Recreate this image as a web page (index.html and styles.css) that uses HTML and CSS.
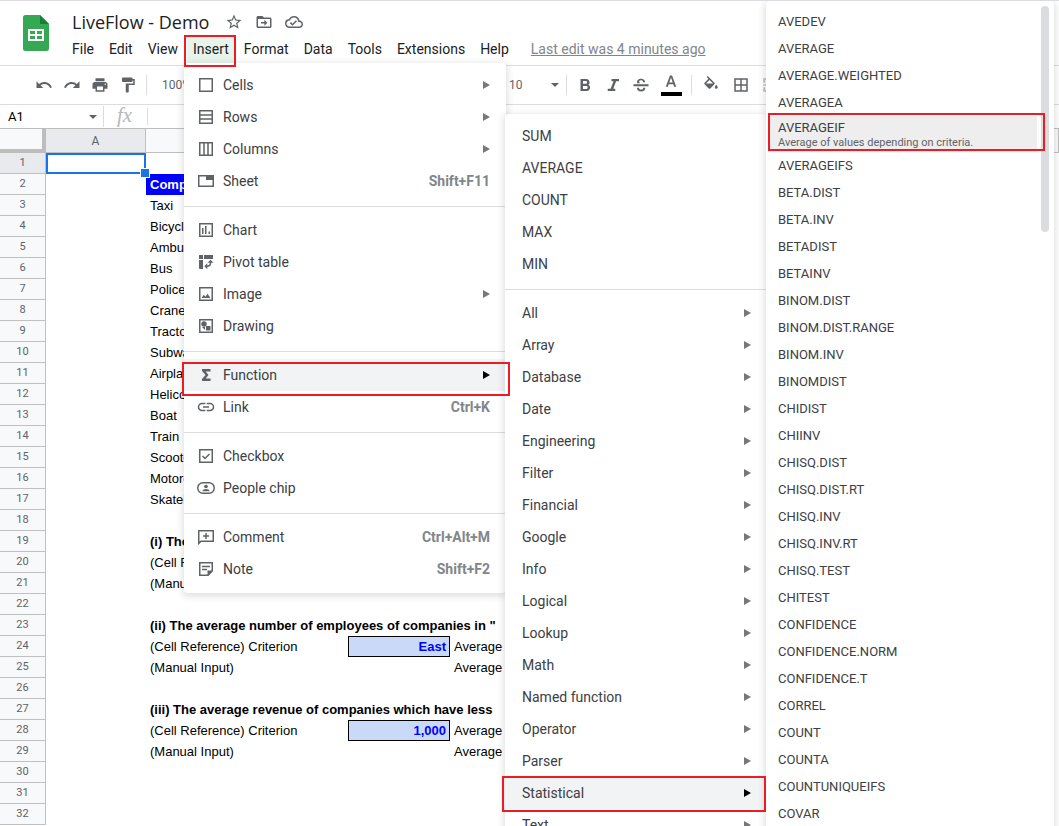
FILE: index.html
```html
<!DOCTYPE html>
<html lang="en">
<head>
    <meta charset="UTF-8">
    <meta name="viewport" content="width=device-width, initial-scale=1.0">
    <title>LiveFlow - Demo</title>
    <link rel="stylesheet" href="styles.css">
</head>
<body>
    <header class="header">
        <svg class="logo" viewBox="0 0 26 36">
            <path d="M2.500 0H17L26 9V33.500A2.500 2.500 0 0 1 23.500 36H2.500A2.500 2.500 0 0 1 0 33.500V2.500A2.500 2.500 0 0 1 2.500 0Z" fill="#34a853"/>
            <path d="M17 0L26 9H17Z" fill="#188038"/>
            <path fill="#fff" fill-rule="evenodd" d="M5 14H21V26H5ZM7 16V19H12V16ZM14 16V19H19V16ZM7 21V24H12V21ZM14 21V24H19V21Z"/>
        </svg>
        <div class="header-main">
            <div class="title-row">
                <input class="doc-title" type="text" value="LiveFlow - Demo" aria-label="Document name">
                <button class="title-btn" aria-label="Star">
                    <svg viewBox="0 0 24 24"><path d="M22 9.240l-7.190-.620L12 2 9.190 8.630 2 9.240l5.460 4.730L5.820 21 12 17.270 18.180 21l-1.630-7.030L22 9.240zM12 15.400l-3.760 2.270 1-4.280-3.320-2.880 4.380-.380L12 6.100l1.710 4.040 4.380.380-3.320 2.880 1 4.280L12 15.400z"/></svg>
                </button>
                <button class="title-btn" aria-label="Move">
                    <svg viewBox="0 0 24 24"><path d="M20 6h-8l-2-2H4c-1.100 0-2 .900-2 2v12c0 1.100.900 2 2 2h16c1.100 0 2-.900 2-2V8c0-1.100-.900-2-2-2zm0 12H4V8h16v10zM12.500 17l4-4-4-4v3H8v2h4.500z"/></svg>
                </button>
                <button class="title-btn" aria-label="Saved to cloud">
                    <svg viewBox="0 0 24 24"><path d="M19.350 10.040A7.490 7.490 0 0 0 12 4C9.110 4 6.600 5.640 5.350 8.040A5.994 5.994 0 0 0 0 14c0 3.310 2.690 6 6 6h13c2.760 0 5-2.240 5-5 0-2.640-2.050-4.780-4.650-4.960zM19 18H6c-2.210 0-4-1.790-4-4s1.790-4 4-4h.710C7.370 7.690 9.480 6 12 6c3.040 0 5.500 2.460 5.500 5.500v.500H19c1.660 0 3 1.340 3 3s-1.340 3-3 3zm-9-3.820l-2.090-2.090L6.500 13.500 10 17l6.010-6.010-1.410-1.410z"/></svg>
                </button>
            </div>
            <nav class="menubar">
                <button>File</button>
                <button>Edit</button>
                <button>View</button>
                <button class="open marked">Insert</button>
                <button>Format</button>
                <button>Data</button>
                <button>Tools</button>
                <button>Extensions</button>
                <button>Help</button>
                <a class="last-edit" href="#">Last edit was 4 minutes ago</a>
            </nav>
        </div>
    </header>

    <div class="toolbar">
        <button aria-label="Undo"><svg viewBox="0 0 24 24"><path d="M12.500 8c-2.650 0-5.050.990-6.900 2.600L2 7v9h9l-3.620-3.620c1.390-1.160 3.160-1.880 5.120-1.880 3.540 0 6.550 2.310 7.600 5.500l2.370-.780C21.080 11.030 17.150 8 12.500 8z"/></svg></button>
        <button aria-label="Redo"><svg viewBox="0 0 24 24"><path d="M18.400 10.600C16.550 8.990 14.150 8 11.500 8c-4.650 0-8.580 3.030-9.960 7.220L3.900 16c1.050-3.190 4.050-5.500 7.600-5.500 1.950 0 3.730.720 5.120 1.880L13 16h9V7l-3.600 3.600z"/></svg></button>
        <button aria-label="Print"><svg viewBox="0 0 24 24"><path d="M19 8H5c-1.660 0-3 1.340-3 3v6h4v4h12v-4h4v-6c0-1.660-1.340-3-3-3zm-3 11H8v-5h8v5zm3-7c-.550 0-1-.450-1-1s.450-1 1-1 1 .450 1 1-.450 1-1 1zm-1-9H6v4h12V3z"/></svg></button>
        <button aria-label="Paint format"><svg viewBox="0 0 24 24"><path d="M18 4V3c0-.550-.450-1-1-1H5c-.550 0-1 .450-1 1v4c0 .550.450 1 1 1h12c.550 0 1-.450 1-1V6h1v4H9v11c0 .550.450 1 1 1h2c.550 0 1-.450 1-1v-9h8V4h-3z"/></svg></button>
        <span class="divider"></span>
        <label class="pick zoom"><select aria-label="Zoom"><option>100%</option></select></label>
        <label class="pick font"><select aria-label="Font"><option>Arial</option></select></label>
        <label class="pick size"><select aria-label="Font size"><option>10</option></select></label>
        <span class="divider"></span>
        <button aria-label="Bold"><svg viewBox="0 0 24 24"><path d="M16.500 11.700c1-.700 1.700-1.800 1.700-2.900C18.200 6 16.200 4 13.500 4H6v16h8.200c2.700 0 4.600-2.100 4.600-4.600 0-1.700-.900-3.100-2.300-3.700zM9.300 6.800h3.700a1.800 1.800 0 0 1 0 3.600H9.300zM13.700 17.200H9.300v-3.900h4.400a1.950 1.950 0 0 1 0 3.900z"/></svg></button>
        <button aria-label="Italic"><svg viewBox="0 0 24 24"><path d="M10 4v3h2.710l-3.920 10H5v3h10v-3h-2.710l3.920-10H20V4z"/></svg></button>
        <button aria-label="Strikethrough"><svg viewBox="0 0 24 24"><path d="M2 11h20v2.500H2zM7 9.500C6 5.500 8.500 3.500 12 3.500c3.300 0 5.500 1.700 5.500 4.700h-2.800c0-1.600-1-2.400-2.700-2.400-2.600 0-3.200 1.900-1.800 3.200l.8.500zM6.500 15.500h2.800c.1 1.700 1.200 2.500 2.900 2.500 2.200 0 3-1.200 2.500-2.500h2.900c.5 3.100-1.900 5-5.400 5-3.500 0-5.700-1.800-5.700-5z"/></svg></button>
        <button class="text-color" aria-label="Text color"><svg viewBox="0 0 24 24"><path d="M10.600 2L5 17h2.700l1.200-3.500h6.200l1.200 3.500H19L13.400 2zM9.700 11.200L12 4.700l2.300 6.500z"/></svg></button>
        <span class="divider"></span>
        <button class="wide" aria-label="Fill color"><svg viewBox="0 0 24 24"><path d="M16.560 8.940L7.620 0 6.210 1.410l2.380 2.380-5.150 5.150c-.590.590-.590 1.540 0 2.120l5.500 5.500c.290.290.680.440 1.060.440s.770-.150 1.060-.440l5.500-5.500c.590-.580.590-1.530 0-2.120zM5.210 10L10 5.210 14.790 10H5.210zM19 11.500s-2 2.170-2 3.500c0 1.100.900 2 2 2s2-.900 2-2c0-1.330-2-3.500-2-3.500z"/></svg></button>
        <button class="wide" aria-label="Borders"><svg viewBox="0 0 24 24"><path d="M3 3v18h18V3H3zm8 16H5v-6h6v6zm0-8H5V5h6v6zm8 8h-6v-6h6v6zm0-8h-6V5h6v6z"/></svg></button>
        <button class="off" aria-label="Merge cells"><svg viewBox="0 0 24 24"><path d="M3 3h7v2.500H5.500V9H3zM21 3h-7v2.500h4.500V9H21zM3 21h7v-2.500H5.500V15H3zM21 21h-7v-2.500h4.500V15H21zM3 11h5V8.500l4 3.500-4 3.500V13H3zM21 11h-5V8.500L12 12l4 3.500V13h5z"/></svg></button>
    </div>

    <div class="formula-bar">
        <label class="pick name-box"><input type="text" value="A1" aria-label="Name box"></label>
        <span class="fx">fx</span>
        <input class="formula" type="text" aria-label="Formula">
    </div>

    <table class="sheet">
        <colgroup>
            <col class="col-num"><col class="col-a"><col class="col"><col class="col"><col class="col-d"><col>
        </colgroup>
        <thead>
            <tr><th class="corner"></th><th class="active">A</th><th>B</th><th>C</th><th>D</th><th>E</th></tr>
        </thead>
        <tbody>
            <tr><th class="active">1</th><td class="selected"></td><td></td><td></td><td></td><td></td></tr>
            <tr><th>2</th><td></td><td class="head">Company</td><td class="head"></td><td class="head"></td><td></td></tr>
            <tr><th>3</th><td></td><td>Taxi</td><td></td><td></td><td></td></tr>
            <tr><th>4</th><td></td><td>Bicycle</td><td></td><td></td><td></td></tr>
            <tr><th>5</th><td></td><td>Ambulance</td><td></td><td></td><td></td></tr>
            <tr><th>6</th><td></td><td>Bus</td><td></td><td></td><td></td></tr>
            <tr><th>7</th><td></td><td>Police</td><td></td><td></td><td></td></tr>
            <tr><th>8</th><td></td><td>Crane</td><td></td><td></td><td></td></tr>
            <tr><th>9</th><td></td><td>Tractor</td><td></td><td></td><td></td></tr>
            <tr><th>10</th><td></td><td>Subway</td><td></td><td></td><td></td></tr>
            <tr><th>11</th><td></td><td>Airplane</td><td></td><td></td><td></td></tr>
            <tr><th>12</th><td></td><td>Helicopter</td><td></td><td></td><td></td></tr>
            <tr><th>13</th><td></td><td>Boat</td><td></td><td></td><td></td></tr>
            <tr><th>14</th><td></td><td>Train</td><td></td><td></td><td></td></tr>
            <tr><th>15</th><td></td><td>Scooter</td><td></td><td></td><td></td></tr>
            <tr><th>16</th><td></td><td>Motorcycle</td><td></td><td></td><td></td></tr>
            <tr><th>17</th><td></td><td>Skateboard</td><td></td><td></td><td></td></tr>
            <tr><th>18</th><td></td><td></td><td></td><td></td><td></td></tr>
            <tr><th>19</th><td></td><td class="bold" colspan="4">(i) The</td></tr>
            <tr><th>20</th><td></td><td colspan="2">(Cell Reference)</td><td></td><td></td></tr>
            <tr><th>21</th><td></td><td colspan="2">(Manual Input)</td><td></td><td></td></tr>
            <tr><th>22</th><td></td><td></td><td></td><td></td><td></td></tr>
            <tr><th>23</th><td></td><td class="bold" colspan="4">(ii) The average number of employees of companies in "</td></tr>
            <tr><th>24</th><td></td><td colspan="2">(Cell Reference) Criterion</td><td class="criterion">East</td><td>Average</td></tr>
            <tr><th>25</th><td></td><td colspan="2">(Manual Input)</td><td></td><td>Average</td></tr>
            <tr><th>26</th><td></td><td></td><td></td><td></td><td></td></tr>
            <tr><th>27</th><td></td><td class="bold" colspan="4">(iii) The average revenue of companies which have less</td></tr>
            <tr><th>28</th><td></td><td colspan="2">(Cell Reference) Criterion</td><td class="criterion">1,000</td><td>Average</td></tr>
            <tr><th>29</th><td></td><td colspan="2">(Manual Input)</td><td></td><td>Average</td></tr>
            <tr><th>30</th><td></td><td></td><td></td><td></td><td></td></tr>
            <tr><th>31</th><td></td><td></td><td></td><td></td><td></td></tr>
            <tr><th>32</th><td></td><td></td><td></td><td></td><td></td></tr>
        </tbody>
    </table>

    <!-- Insert menu -->
    <div class="menu insert-menu">
        <button class="sub"><svg viewBox="0 0 18 18"><path class="line" d="M2.750 2.750h12.500v12.500H2.750z"/></svg>Cells</button>
        <button class="sub"><svg viewBox="0 0 18 18"><path class="line" d="M2.750 2.750h12.500v12.500H2.750zM3 7h12M3 11h12"/></svg>Rows</button>
        <button class="sub"><svg viewBox="0 0 18 18"><path class="line" d="M2.750 2.750h12.500v12.500H2.750zM7 3v12M11 3v12"/></svg>Columns</button>
        <button><svg viewBox="0 0 18 18"><path class="line" d="M1.750 3.750h14.500v10.500H1.750z"/><path d="M9 3h7v5H9z"/></svg>Sheet<kbd>Shift+F11</kbd></button>
        <hr>
        <button><svg viewBox="0 0 18 18"><path class="line" d="M2.750 2.750h12.500v12.500H2.750z"/><path d="M5 7h1.500v6H5zM8 5h1.500v8H8zM11.500 10.500H13V13h-1.500z"/></svg>Chart</button>
        <button><svg viewBox="0 0 18 18"><path d="M2 2h4v4H2zM7 2h9v4H7zM2 7h4v9H3a1 1 0 0 1-1-1z"/><path d="M13.500 6.800l3 3h-2.200c0 2.800-1.500 4.200-4 4.200v2.300l-3-3 3-3v2.200c1.600 0 2.400-.9 2.400-2.700h-2.200z"/></svg>Pivot table</button>
        <button class="sub"><svg viewBox="0 0 18 18"><path class="line" d="M2.750 2.750h12.500v12.500H2.750z"/><path d="M4.500 13l2.300-3.300 1.700 2 2-3L13.500 13z"/></svg>Image</button>
        <button><svg viewBox="0 0 18 18"><path class="line" d="M2.750 2.750h12.500v12.500H2.750z"/><circle cx="7" cy="7" r="2.700"/><path d="M9 9h4.500v4.500H9z"/><path d="M5 10h3v3z"/></svg>Drawing</button>
        <hr>
        <button class="sub current marked"><svg viewBox="0 0 18 18"><path d="M5 3h8.500v2.500H8.700L11.500 9l-2.800 3.500h4.800V15H5v-2l3.500-4L5 5z"/></svg>Function</button>
        <button><svg viewBox="0 0 18 18"><path class="line" d="M8.300 5.500H5a3.500 3.500 0 0 0 0 7h3.300M9.700 5.500H13a3.500 3.500 0 0 1 0 7H9.700M6 9h6"/></svg>Link<kbd>Ctrl+K</kbd></button>
        <hr>
        <button><svg viewBox="0 0 18 18"><path class="line" d="M2.750 2.750h12.500v12.500H2.750zM5.500 9l2.500 2.500 4.500-4.500"/></svg>Checkbox</button>
        <button><svg viewBox="0 0 18 18"><rect class="line" x=".8" y="3.750" width="16.400" height="10.500" rx="5"/><circle cx="9" cy="7.500" r="1.800"/><path d="M5.500 12.300c0-3 7-3 7 0z"/></svg>People chip</button>
        <hr>
        <button><svg viewBox="0 0 18 18"><path class="line" d="M1.750 15.500V2.750h14.500v10.500H4zM9 5v6M6 8h6"/></svg>Comment<kbd>Ctrl+Alt+M</kbd></button>
        <button><svg viewBox="0 0 18 18"><path class="line" d="M15.250 11V2.750H2.750v12.500H11zM5 6.500h8M5 9.500h5"/><path d="M10.500 10.500H16L10.500 16z"/></svg>Note<kbd>Shift+F2</kbd></button>
    </div>

    <!-- Function submenu -->
    <div class="menu function-menu">
        <button>SUM</button>
        <button>AVERAGE</button>
        <button>COUNT</button>
        <button>MAX</button>
        <button>MIN</button>
        <hr>
        <button class="sub">All</button>
        <button class="sub">Array</button>
        <button class="sub">Database</button>
        <button class="sub">Date</button>
        <button class="sub">Engineering</button>
        <button class="sub">Filter</button>
        <button class="sub">Financial</button>
        <button class="sub">Google</button>
        <button class="sub">Info</button>
        <button class="sub">Logical</button>
        <button class="sub">Lookup</button>
        <button class="sub">Math</button>
        <button class="sub">Named function</button>
        <button class="sub">Operator</button>
        <button class="sub">Parser</button>
        <button class="sub current marked">Statistical</button>
        <button class="sub">Text</button>
    </div>

    <!-- Statistical functions -->
    <div class="menu stat-menu">
        <button>AVEDEV</button>
        <button>AVERAGE</button>
        <button>AVERAGE.WEIGHTED</button>
        <button>AVERAGEA</button>
        <button class="current marked">AVERAGEIF<small>Average of values depending on criteria.</small></button>
        <button>AVERAGEIFS</button>
        <button>BETA.DIST</button>
        <button>BETA.INV</button>
        <button>BETADIST</button>
        <button>BETAINV</button>
        <button>BINOM.DIST</button>
        <button>BINOM.DIST.RANGE</button>
        <button>BINOM.INV</button>
        <button>BINOMDIST</button>
        <button>CHIDIST</button>
        <button>CHIINV</button>
        <button>CHISQ.DIST</button>
        <button>CHISQ.DIST.RT</button>
        <button>CHISQ.INV</button>
        <button>CHISQ.INV.RT</button>
        <button>CHISQ.TEST</button>
        <button>CHITEST</button>
        <button>CONFIDENCE</button>
        <button>CONFIDENCE.NORM</button>
        <button>CONFIDENCE.T</button>
        <button>CORREL</button>
        <button>COUNT</button>
        <button>COUNTA</button>
        <button>COUNTUNIQUEIFS</button>
        <button>COVAR</button>
        <span class="scrollbar"></span>
    </div>
</body>
</html>
```
FILE: styles.css
```css
* {
    box-sizing: border-box;
}
body {
    margin: 0;
    height: 100vh;
    overflow: hidden;
    position: relative;
    background-color: #fff;
    border-top: 1px solid #dadce0;
    font-family: Roboto, Arial, sans-serif;
    font-size: 14px;
    color: #202124;
}
button, input, select {
    font: inherit;
    color: inherit;
    background: none;
    border: none;
    margin: 0;
    padding: 0;
    outline: none;
}
svg {
    display: block;
    flex: none;
    fill: #5f6368;
}
.line {
    fill: none;
    stroke: #5f6368;
    stroke-width: 1.5;
}

/* header */
.header {
    display: flex;
    height: 65px;
    border-bottom: 1px solid #dadce0;
}
.logo {
    width: 26px;
    height: 36px;
    margin: 14px 16px 0 23px;
}
.title-row {
    display: flex;
    align-items: center;
    height: 26px;
    margin-top: 8px;
}
.doc-title {
    width: 154px;
    padding-left: 7px;
    font-family: "Open Sans", sans-serif;
    font-size: 18px;
}
.title-btn {
    width: 30px;
    display: flex;
    justify-content: center;
}
.title-btn svg {
    width: 18px;
    height: 18px;
}
.menubar {
    display: flex;
    align-items: center;
    gap: 1px;
    height: 28px;
}
.menubar button {
    height: 28px;
    padding: 0 7px;
}
.menubar .open {
    margin: 0 1px;
    padding: 0 6px;
    background-color: #e6f4ea;
}
.last-edit {
    margin-left: 14px;
    color: #80868b;
}

/* toolbar */
.toolbar {
    display: flex;
    align-items: center;
    height: 39px;
    padding-left: 30px;
    border-bottom: 1px solid #dadce0;
}
.toolbar button {
    width: 28px;
    height: 26px;
    flex: none;
    display: flex;
    align-items: center;
    justify-content: center;
}
.toolbar svg {
    width: 18px;
    height: 18px;
}
.toolbar .wide {
    width: 30px;
}
.toolbar .off {
    opacity: 0.4;
}
.toolbar .text-color {
    width: 32px;
    flex-direction: column;
}
.text-color::after {
    content: "";
    width: 21px;
    height: 4px;
    background-color: #000;
}
.divider {
    width: 1px;
    height: 20px;
    margin: 0 4px;
    background-color: #dadce0;
}
.pick {
    display: flex;
    align-items: center;
    justify-content: space-between;
    color: #5f6368;
}
.pick::after {
    content: "";
    border: 4px solid transparent;
    border-top-color: #5f6368;
    border-bottom: none;
}
.pick select {
    appearance: none;
    font-size: 12px;
}
.zoom {
    width: 70px;
    padding-left: 11px;
}
.font {
    width: 280px;
    padding-left: 20px;
}
.size {
    width: 50px;
    margin: 0 3px 0 8px;
}

/* formula bar */
.formula-bar {
    display: flex;
    align-items: center;
    height: 24px;
    border-bottom: 1px solid #bdbdbd;
}
.name-box {
    width: 104px;
    height: 21px;
    padding: 0 6px 0 8px;
    border-right: 1px solid #dadce0;
}
.name-box input {
    width: 60px;
    font-size: 13px;
    color: #000;
}
.fx {
    width: 44px;
    height: 17px;
    padding-left: 13px;
    border-right: 1px solid #dadce0;
    font: italic 21px/15px "Liberation Serif", serif;
    color: #b8b8b8;
}
.formula {
    flex: 1;
}

/* sheet */
.sheet {
    width: 100%;
    table-layout: fixed;
    border-collapse: separate;
    border-spacing: 0;
    font-family: "Liberation Sans", Arial, sans-serif;
    font-size: 13px;
    color: #000;
}
.col-num {
    width: 46px;
}
.col-a {
    width: 100px;
}
.col {
    width: 101px;
}
.col-d {
    width: 102px;
}
.sheet th {
    height: 21px;
    padding: 0;
    background-color: #f8f9fa;
    border-right: 1px solid #c0c0c0;
    border-bottom: 1px solid #c0c0c0;
    font: 11px/18px Roboto, sans-serif;
    color: #5f6368;
}
.sheet thead th {
    height: 24px;
    font-size: 12px;
}
.sheet .active {
    background-color: #e8eaed;
}
.sheet .corner {
    border-right: 4px solid #bdbdbd;
    border-bottom: 4px solid #bdbdbd;
}
.sheet td {
    height: 21px;
    padding: 0 3px 0 4px;
    line-height: 19px;
    white-space: nowrap;
    overflow: hidden;
}
.sheet .head {
    background-color: #0000ff;
    color: #fff;
    font-weight: bold;
}
.sheet .bold {
    font-weight: bold;
}
.sheet .criterion {
    border: 1px solid #000;
    background-color: #c9daf8;
    color: #0000ff;
    font-weight: bold;
    text-align: right;
}
.sheet .selected {
    position: relative;
    overflow: visible;
    outline: 2px solid #1a73e8;
    outline-offset: -2px;
}
.selected::after {
    content: "";
    position: absolute;
    right: -4px;
    bottom: -4px;
    width: 8px;
    height: 8px;
    border: 1px solid #fff;
    background-color: #1a73e8;
}

/* menus */
.menu {
    position: absolute;
    background-color: #fff;
    border-radius: 4px;
    box-shadow: 0 2px 6px 2px rgba(60, 64, 67, 0.15);
    color: #3c4043;
}
.menu button {
    display: flex;
    align-items: center;
    width: 100%;
    height: 32px;
    text-align: left;
}
.menu hr {
    height: 1px;
    margin: 9px 0 7px;
    border: none;
    background-color: #dadce0;
}
.menu kbd {
    margin-left: auto;
    font-family: inherit;
    font-weight: bold;
    color: #80868b;
}
.menu .sub::after {
    content: "";
    margin-left: auto;
    border: 4px solid transparent;
    border-left: 7px solid #777;
    border-right: none;
}
.menu .current {
    background-color: #f1f3f4;
}
.menu .sub.current::after {
    border-left-color: #000;
}
.insert-menu {
    top: 62px;
    left: 184px;
    width: 322px;
    padding: 6px 0 8px;
}
.insert-menu button {
    padding: 0 16px 0 13px;
}
.insert-menu svg {
    width: 18px;
    height: 18px;
    margin-right: 8px;
}
.function-menu {
    top: 113px;
    left: 505px;
    width: 261px;
    padding: 6px 0;
}
.function-menu button {
    padding: 0 15px 0 17px;
}
.stat-menu {
    top: 0;
    left: 766px;
    width: 288px;
    padding: 7px 17px 7px 2px;
}
.stat-menu button {
    height: 27px;
    padding-left: 10px;
    font-size: 13px;
}
.stat-menu .current {
    flex-direction: column;
    align-items: flex-start;
    justify-content: center;
    gap: 1px;
    height: 36px;
    background-color: #eee;
}
.stat-menu small {
    font-size: 11px;
    color: #5f6368;
}
.scrollbar {
    position: absolute;
    top: 5px;
    right: 5px;
    width: 8px;
    height: 226px;
    border-radius: 4px;
    background-color: #dadce0;
}

/* red frames round the steps to click */
.marked {
    position: relative;
}
.marked::before {
    content: "";
    position: absolute;
    z-index: 10;
    top: 0;
    right: -1px;
    bottom: -4px;
    left: -3px;
    border: 2px solid #ed1c24;
}
.menu .marked::before {
    top: 3px;
    right: -4px;
    bottom: -5px;
    left: -2px;
}
.function-menu .marked::before {
    top: -1px;
    right: 0;
    bottom: -3px;
    left: -3px;
}
.stat-menu .marked::before {
    top: -3px;
    right: -8px;
    bottom: 1px;
    left: 0;
}
```
